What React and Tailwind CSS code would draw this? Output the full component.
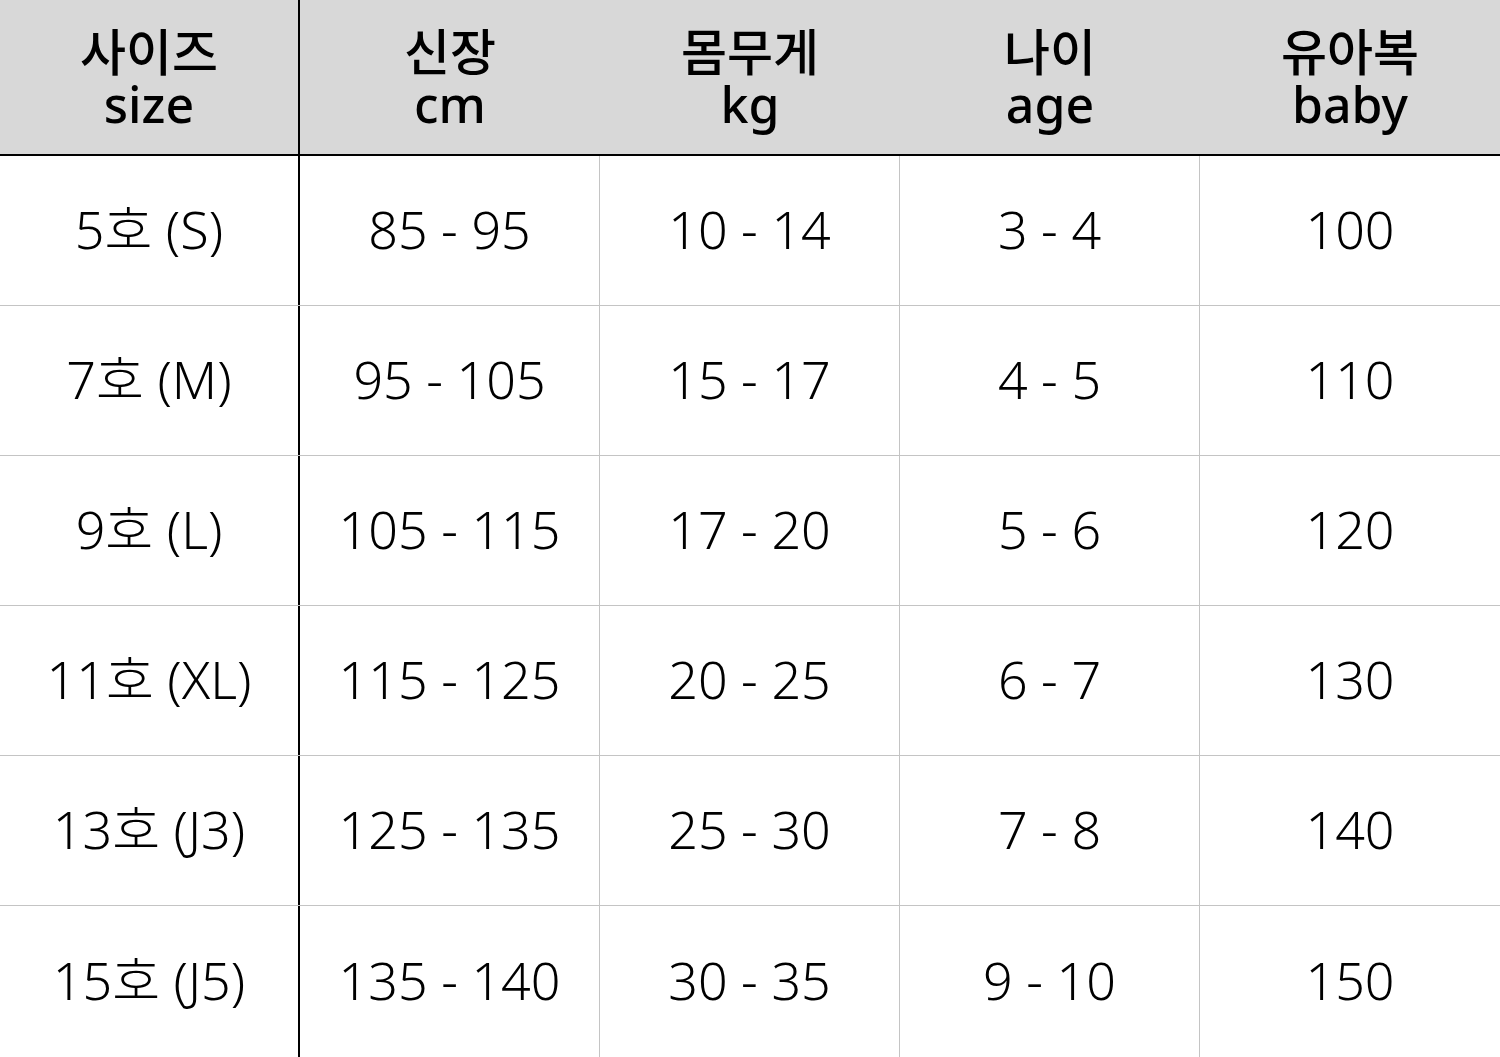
import React from "react";

const heads = [
  ["사이즈", "size"],
  ["신장", "cm"],
  ["몸무게", "kg"],
  ["나이", "age"],
  ["유아복", "baby"],
];

const rows = [
  ["5호 (S)", "85 - 95", "10 - 14", "3 - 4", "100"],
  ["7호 (M)", "95 - 105", "15 - 17", "4 - 5", "110"],
  ["9호 (L)", "105 - 115", "17 - 20", "5 - 6", "120"],
  ["11호 (XL)", "115 - 125", "20 - 25", "6 - 7", "130"],
  ["13호 (J3)", "125 - 135", "25 - 30", "7 - 8", "140"],
  ["15호 (J5)", "135 - 140", "30 - 35", "9 - 10", "150"],
];

export default function App() {
  return (
    <div
      className="w-[1500px] h-[1057px] bg-white text-black overflow-hidden"
      style={{ fontFamily: '"Noto Sans", "Noto Sans CJK KR", sans-serif' }}
    >
      <div className="grid grid-cols-5 h-[156px] bg-[#d8d8d8] border-b-2 border-black">
        {heads.map(([ko, en], i) => (
          <div
            key={i}
            className={
              "flex flex-col items-center justify-center pt-[2px] text-[50px] font-medium leading-[52px] " +
              (i === 0 ? "border-r-2 border-black" : "")
            }
          >
            <span>{ko}</span>
            <span>{en}</span>
          </div>
        ))}
      </div>
      {rows.map((r, ri) => (
        <div
          key={ri}
          className={
            "grid grid-cols-5 " +
            (ri < rows.length - 1 ? "h-[150px] border-b border-[#c4c4c4]" : "h-[151px]")
          }
        >
          {r.map((c, ci) => (
            <div
              key={ci}
              className={
                "flex items-center justify-center pb-[4px] text-[52px] font-light " +
                (ci === 0
                  ? "border-r-2 border-black"
                  : ci < 4
                  ? "border-r border-[#c4c4c4]"
                  : "")
              }
            >
              {c}
            </div>
          ))}
        </div>
      ))}
    </div>
  );
}
